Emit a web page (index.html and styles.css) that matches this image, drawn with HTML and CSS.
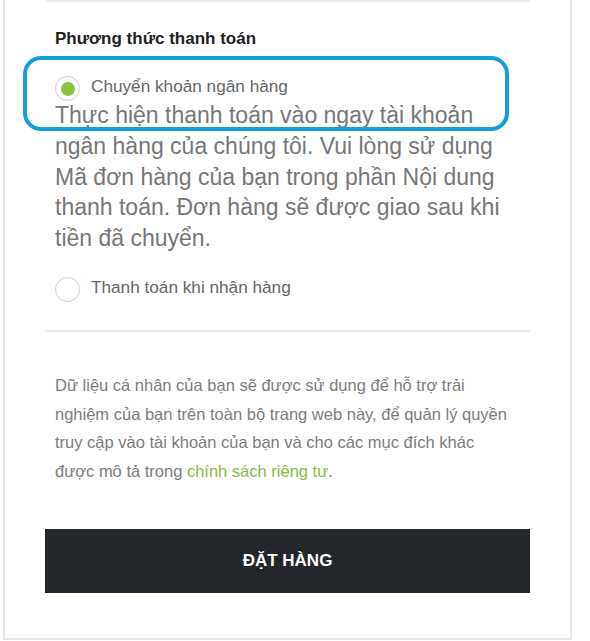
FILE: index.html
```html
<!DOCTYPE html>
<html lang="vi">
<head>
    <meta charset="UTF-8">
    <meta name="viewport" content="width=device-width, initial-scale=1.0">
    <title>Thanh toán</title>
    <link rel="stylesheet" href="styles.css">
</head>
<body>
    <div class="checkout">
        <div class="payment">
            <h3 class="payment-title">Phương thức thanh toán</h3>
            <ul class="methods">
                <li class="method">
                    <label class="method-row"><span class="radio checked"></span>Chuyển khoản ngân hàng</label>
                    <p class="method-desc">Thực hiện thanh toán vào ngay tài khoản ngân hàng của chúng tôi. Vui lòng sử dụng Mã đơn hàng của bạn trong phần Nội dung thanh toán. Đơn hàng sẽ được giao sau khi tiền đã chuyển.</p>
                </li>
                <li class="method">
                    <label class="method-row"><span class="radio"></span>Thanh toán khi nhận hàng</label>
                </li>
            </ul>
        </div>

        <p class="privacy">Dữ liệu cá nhân của bạn sẽ được sử dụng để hỗ trợ trải nghiệm của bạn trên toàn bộ trang web này, để quản lý quyền truy cập vào tài khoản của bạn và cho các mục đích khác được mô tả trong <a href="#">chính sách riêng tư</a>.</p>

        <button class="place-order">ĐẶT HÀNG</button>

        <!-- annotation drawn over the selected method -->
        <div class="highlight"></div>
    </div>
</body>
</html>
```

FILE: styles.css
```css
body {
    font-family: "Liberation Sans", Arial, sans-serif;
    margin: 0;
    padding: 0;
    background-color: #fff;
}
.checkout {
    position: relative;
    box-sizing: border-box;
    width: 569px;
    margin-left: 3px;
    padding: 0 40px 45px;
    border: 2px solid #e6e6e6;
    border-top: none;
}
.payment {
    padding: 0 10px 28px;
    border-top: 2px solid #ececec;
    border-bottom: 2px solid #ececec;
}
.payment-title {
    margin: 27px 0 0;
    font-size: 17px;
    font-weight: bold;
    color: #222;
    line-height: 19px;
}
.methods {
    list-style: none;
    margin: 0;
    padding: 0;
}
.method {
    margin-top: 28px;
}
.method + .method {
    margin-top: 23px;
}
.method-row {
    display: flex;
    align-items: flex-start;
    gap: 11px;
    font-size: 17.2px;
    line-height: 21px;
    color: #666;
    cursor: pointer;
}
.radio {
    box-sizing: border-box;
    width: 25px;
    height: 25px;
    flex: none;
    border: 1px solid #cfcfcf;
    border-radius: 50%;
    display: flex;
    align-items: center;
    justify-content: center;
}
.radio.checked::after {
    content: "";
    width: 14px;
    height: 14px;
    border-radius: 50%;
    background-color: #8cc23f;
}
.method-desc {
    margin: -1px 0 0;
    font-size: 23px;
    line-height: 30.75px;
    color: #777;
}
.privacy {
    margin: 39px 0 0;
    padding: 0 15px 0 10px;
    font-size: 16.5px;
    line-height: 28.8px;
    color: #7d7d7d;
}
.privacy a {
    color: #8ab944;
    text-decoration: none;
}
.place-order {
    display: block;
    width: 100%;
    height: 64px;
    margin-top: 43px;
    border: none;
    background-color: #23272b;
    color: #fff;
    font-family: inherit;
    font-size: 17px;
    font-weight: bold;
    cursor: pointer;
}
.highlight {
    position: absolute;
    left: 18px;
    top: 56px;
    width: 486px;
    height: 75px;
    box-sizing: border-box;
    border: 4px solid #12a0dc;
    border-radius: 18px;
    pointer-events: none;
}
```
